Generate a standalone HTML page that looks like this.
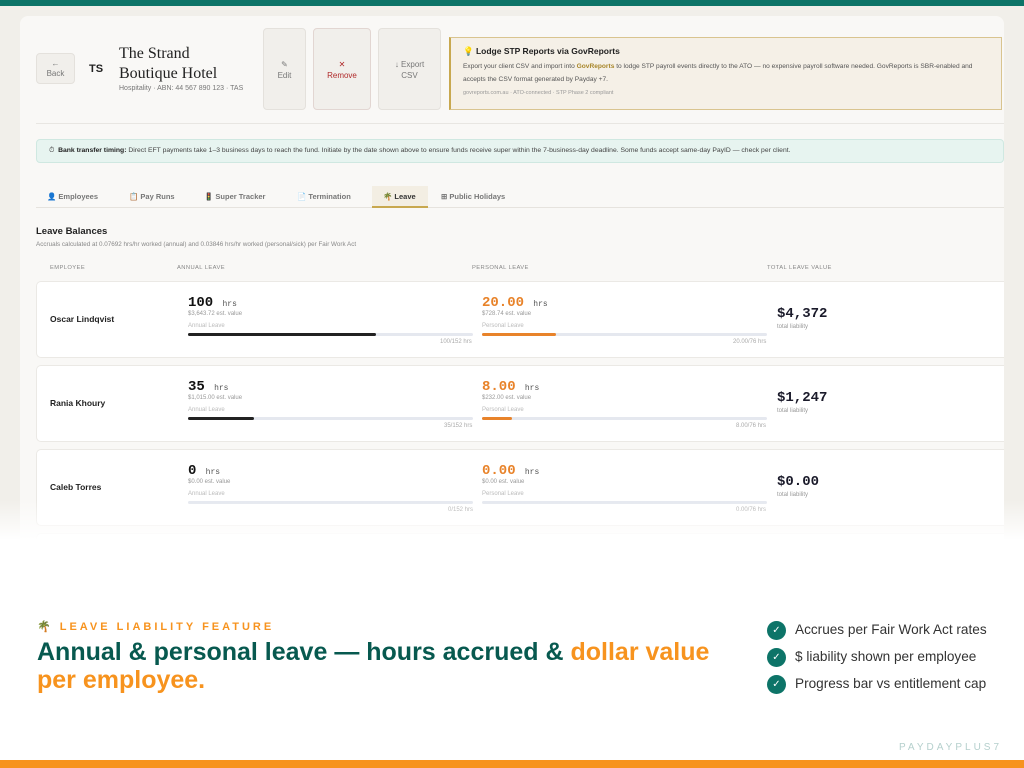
<!DOCTYPE html>
<html><head><meta charset="utf-8"><style>
*{margin:0;padding:0;box-sizing:border-box}
body{width:1024px;height:768px;position:relative;overflow:hidden;background:#fff;font-family:"Liberation Sans",sans-serif}
.a{position:absolute}
.top{left:0;top:0;width:1024px;height:6px;background:#0d7468}
.bot{left:0;top:760px;width:1024px;height:8px;background:#f7931e}
.outer{left:0;top:6px;width:1024px;height:540px;background:#f1efea}
.card{left:20px;top:16px;width:984px;height:540px;background:#f9f8f6;border-radius:8px;overflow:hidden}
.btn{background:#f1efeb;border:1px solid #e4e1dc;border-radius:4px;font-size:8px;color:#777;text-align:center}
.fade{left:0;top:500px;width:1024px;height:50px;background:linear-gradient(rgba(255,255,255,0),#fff 80%)}
.row{left:36px;width:968px;height:77px;background:#fff;border:1px solid #ebe9e5;border-right:none;border-radius:5px 0 0 5px}
.mono{font-family:"Liberation Mono",monospace;font-weight:bold}
.small{font-size:6px;color:#999}
.bar{height:3px;background:#e5e8ef;border-radius:2px}
.chk{width:19px;height:19px;border-radius:50%;background:#0d7468;color:#fff;font-size:10px;text-align:center;line-height:19px}
.li{font-size:13.6px;color:#333}
.tab{top:192px;font-size:7.5px;color:#777;font-weight:bold}
</style></head><body>
<div class="a outer"></div>
<div class="a top"></div>
<div class="a card"></div>
<div class="a btn" style="left:36px;top:53px;width:39px;height:31px;padding-top:5px;line-height:10px">←<br>Back</div>
<div class="a" style="left:89px;top:63px;font-size:11px;font-weight:bold;color:#222">TS</div>
<div class="a" style="left:119px;top:44px;font-family:'Liberation Serif',serif;font-size:16px;line-height:20px;color:#222">The Strand<br>Boutique Hotel</div>
<div class="a" style="left:119px;top:85px;font-size:7px;color:#777">Hospitality · ABN: 44 567 890 123 · TAS</div>
<div class="a btn" style="left:263px;top:28px;width:43px;height:82px;padding-top:30px;line-height:11px">✎<br>Edit</div>
<div class="a btn" style="left:313px;top:28px;width:58px;height:82px;padding-top:30px;line-height:11px;color:#b02a2a;border-color:#e2d6d2">✕<br>Remove</div>
<div class="a btn" style="left:378px;top:28px;width:63px;height:82px;padding-top:30px;line-height:11px">↓ Export<br>CSV</div>
<div class="a" style="left:449px;top:37px;width:553px;height:73px;background:#f5f0e7;border:1px solid #d9c48f;border-left:2px solid #c8a84f;padding:8px 12px">
<div style="font-size:8.5px;font-weight:bold;color:#222"><span style="color:#e8b52a">💡</span> Lodge STP Reports via GovReports</div>
<div style="font-size:6.6px;color:#555;line-height:13px;margin-top:3px">Export your client CSV and import into <b style="color:#a8862a">GovReports</b> to lodge STP payroll events directly to the ATO — no expensive payroll software needed. GovReports is SBR-enabled and accepts the CSV format generated by Payday +7.</div>
<div style="font-size:5.5px;color:#999;margin-top:4px">govreports.com.au · ATO-connected · STP Phase 2 compliant</div></div>
<div class="a" style="left:36px;top:123px;width:968px;height:1px;background:#e8e6e2"></div>
<div class="a" style="left:36px;top:139px;width:968px;height:24px;background:#e7f4f0;border:1px solid #cfe8e1;border-radius:4px;font-size:6.8px;color:#444;padding:7px 12px">⏱ &nbsp;<b style="color:#222">Bank transfer timing:</b> Direct EFT payments take 1–3 business days to reach the fund. Initiate by the date shown above to ensure funds receive super within the 7-business-day deadline. Some funds accept same-day PayID — check per client.</div>
<div class="a" style="left:36px;top:207px;width:968px;height:1px;background:#e6e3de"></div>
<div class="a" style="left:372px;top:186px;width:56px;height:22px;background:#f3eee3;border-bottom:2px solid #c8a84f"></div>
<div class="a tab" style="left:47px"><span style="color:#5a3a7a">👤</span> Employees</div>
<div class="a tab" style="left:129px"><span style="color:#c77">📋</span> Pay Runs</div>
<div class="a tab" style="left:204px">🚦 Super Tracker</div>
<div class="a tab" style="left:297px">📄 Termination</div>
<div class="a tab" style="left:383px;color:#333">🌴 Leave</div>
<div class="a tab" style="left:441px">⊞ Public Holidays</div>
<div class="a" style="left:36px;top:226px;font-size:9.5px;font-weight:bold;color:#222">Leave Balances</div>
<div class="a" style="left:36px;top:241px;font-size:6.3px;color:#888">Accruals calculated at 0.07692 hrs/hr worked (annual) and 0.03846 hrs/hr worked (personal/sick) per Fair Work Act</div>
<div class="a" style="left:50px;top:265px;font-size:5.8px;color:#888;letter-spacing:.4px">EMPLOYEE</div>
<div class="a" style="left:177px;top:265px;font-size:5.8px;color:#888;letter-spacing:.4px">ANNUAL LEAVE</div>
<div class="a" style="left:472px;top:265px;font-size:5.8px;color:#888;letter-spacing:.4px">PERSONAL LEAVE</div>
<div class="a" style="left:767px;top:265px;font-size:5.8px;color:#888;letter-spacing:.4px">TOTAL LEAVE VALUE</div>

<div class="a row" style="top:281px"></div>
<div class="a row" style="top:365px"></div>
<div class="a row" style="top:449px"></div>

<div class="a" style="left:50px;top:314px;font-size:8.5px;font-weight:bold;color:#222">Oscar Lindqvist</div>
<div class="a" style="left:188px;top:293px"><span class="mono" style="font-size:14px;color:#111">100</span> <span style="font-family:'Liberation Mono',monospace;font-size:8px;color:#555">&nbsp;hrs</span></div>
<div class="a small" style="left:188px;top:311px">$3,643.72 est. value</div>
<div class="a small" style="left:188px;top:323px;color:#bbb">Annual Leave</div>
<div class="a bar" style="left:188px;top:333px;width:285px"><div style="width:66%;height:3px;background:#222;border-radius:2px"></div></div>
<div class="a small" style="left:440px;top:339px;color:#aaa">100/152 hrs</div>
<div class="a" style="left:482px;top:293px"><span class="mono" style="font-size:14px;color:#e8832a">20.00</span> <span style="font-family:'Liberation Mono',monospace;font-size:8px;color:#555">&nbsp;hrs</span></div>
<div class="a small" style="left:482px;top:311px">$728.74 est. value</div>
<div class="a small" style="left:482px;top:323px;color:#bbb">Personal Leave</div>
<div class="a bar" style="left:482px;top:333px;width:285px"><div style="width:26%;height:3px;background:#e8832a;border-radius:2px"></div></div>
<div class="a small" style="left:733px;top:339px;color:#aaa">20.00/76 hrs</div>
<div class="a mono" style="left:777px;top:306px;font-size:14px;color:#1a1a2a">$4,372</div>
<div class="a small" style="left:777px;top:324px">total liability</div>

<div class="a" style="left:50px;top:398px;font-size:8.5px;font-weight:bold;color:#222">Rania Khoury</div>
<div class="a" style="left:188px;top:377px"><span class="mono" style="font-size:14px;color:#111">35</span> <span style="font-family:'Liberation Mono',monospace;font-size:8px;color:#555">&nbsp;hrs</span></div>
<div class="a small" style="left:188px;top:395px">$1,015.00 est. value</div>
<div class="a small" style="left:188px;top:407px;color:#bbb">Annual Leave</div>
<div class="a bar" style="left:188px;top:417px;width:285px"><div style="width:23%;height:3px;background:#222;border-radius:2px"></div></div>
<div class="a small" style="left:444px;top:423px;color:#aaa">35/152 hrs</div>
<div class="a" style="left:482px;top:377px"><span class="mono" style="font-size:14px;color:#e8832a">8.00</span> <span style="font-family:'Liberation Mono',monospace;font-size:8px;color:#555">&nbsp;hrs</span></div>
<div class="a small" style="left:482px;top:395px">$232.00 est. value</div>
<div class="a small" style="left:482px;top:407px;color:#bbb">Personal Leave</div>
<div class="a bar" style="left:482px;top:417px;width:285px"><div style="width:10.5%;height:3px;background:#e8832a;border-radius:2px"></div></div>
<div class="a small" style="left:736px;top:423px;color:#aaa">8.00/76 hrs</div>
<div class="a mono" style="left:777px;top:390px;font-size:14px;color:#1a1a2a">$1,247</div>
<div class="a small" style="left:777px;top:408px">total liability</div>

<div class="a" style="left:50px;top:482px;font-size:8.5px;font-weight:bold;color:#222">Caleb Torres</div>
<div class="a" style="left:188px;top:461px"><span class="mono" style="font-size:14px;color:#111">0</span> <span style="font-family:'Liberation Mono',monospace;font-size:8px;color:#555">&nbsp;hrs</span></div>
<div class="a small" style="left:188px;top:479px">$0.00 est. value</div>
<div class="a small" style="left:188px;top:491px;color:#bbb">Annual Leave</div>
<div class="a bar" style="left:188px;top:501px;width:285px"></div>
<div class="a small" style="left:448px;top:507px;color:#aaa">0/152 hrs</div>
<div class="a" style="left:482px;top:461px"><span class="mono" style="font-size:14px;color:#e8832a">0.00</span> <span style="font-family:'Liberation Mono',monospace;font-size:8px;color:#555">&nbsp;hrs</span></div>
<div class="a small" style="left:482px;top:479px">$0.00 est. value</div>
<div class="a small" style="left:482px;top:491px;color:#bbb">Personal Leave</div>
<div class="a bar" style="left:482px;top:501px;width:285px"></div>
<div class="a small" style="left:736px;top:507px;color:#aaa">0.00/76 hrs</div>
<div class="a mono" style="left:777px;top:474px;font-size:14px;color:#1a1a2a">$0.00</div>
<div class="a small" style="left:777px;top:492px">total liability</div>

<div class="a row" style="top:533px"></div>
<div class="a fade"></div>
<div class="a" style="left:0;top:546px;width:1024px;height:214px;background:#fff"></div>

<div class="a" style="left:37px;top:620px;font-size:11px;font-weight:bold;color:#f7931e;letter-spacing:3px">🌴 LEAVE LIABILITY FEATURE</div>
<div class="a" style="left:37px;top:638px;width:690px;font-size:25px;font-weight:bold;line-height:28px;color:#07594f">Annual &amp; personal leave — hours accrued &amp; <span style="color:#f7931e">dollar value per employee.</span></div>
<div class="a chk" style="left:767px;top:621px">✓</div><div class="a li" style="left:795px;top:622px">Accrues per Fair Work Act rates</div>
<div class="a chk" style="left:767px;top:648px">✓</div><div class="a li" style="left:795px;top:649px">$ liability shown per employee</div>
<div class="a chk" style="left:767px;top:675px">✓</div><div class="a li" style="left:795px;top:676px">Progress bar vs entitlement cap</div>
<div class="a" style="left:899px;top:742px;font-size:10px;letter-spacing:3px;color:#b5d0cd">PAYDAYPLUS7</div>
<div class="a bot"></div>
</body></html>
